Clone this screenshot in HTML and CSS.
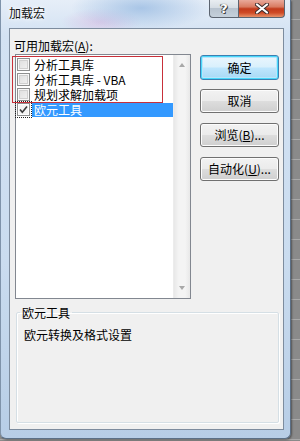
FILE: index.html
```html
<!DOCTYPE html>
<html lang="zh-CN">
<head>
<meta charset="utf-8">
<title>加载宏</title>
<link rel="stylesheet" href="styles.css">
</head>
<body>
<div class="window">
  <div class="titlebar">
    <span class="title">加载宏</span>
    <div class="caption-buttons">
      <div class="cap help">?</div>
      <div class="cap close">
        <svg width="14" height="11" viewBox="0 0 14 11">
          <path d="M2 1.5 L12 9.5 M12 1.5 L2 9.5" stroke="#3a2a2a" stroke-width="4" stroke-linecap="round"/>
          <path d="M2 1.5 L12 9.5 M12 1.5 L2 9.5" stroke="#ffffff" stroke-width="2.2" stroke-linecap="round"/>
        </svg>
      </div>
    </div>
  </div>
  <div class="client">
    <div class="main">
      <div class="left">
        <div class="label">可用加载宏(<u>A</u>):</div>
        <div class="listbox">
          <div class="items">
            <div class="item"><span class="cb"></span><span class="txt">分析工具库</span></div>
            <div class="item"><span class="cb"></span><span class="txt">分析工具库 - VBA</span></div>
            <div class="item"><span class="cb"></span><span class="txt">规划求解加载项</span></div>
            <div class="item selected"><span class="cb checked"><svg width="11" height="11" viewBox="0 0 11 11"><path d="M2 5.5 L4.3 8.2 L9 2.5" fill="none" stroke="#3b3b3b" stroke-width="1.6"/></svg></span><span class="txt">欧元工具</span></div>
          </div>
          <div class="scrollbar">
            <span class="arrow up"></span>
            <span class="arrow down"></span>
          </div>
          <div class="annot"></div>
        </div>
      </div>
      <div class="buttons">
        <div class="btn default">确定</div>
        <div class="btn">取消</div>
        <div class="btn">浏览(<u>B</u>)...</div>
        <div class="btn">自动化(<u>U</u>)...</div>
      </div>
    </div>
    <fieldset class="group">
      <legend>欧元工具</legend>
      <p class="desc">欧元转换及格式设置</p>
    </fieldset>
  </div>
</div>
</body>
</html>
```

FILE: styles.css
```css
* { box-sizing: border-box; }
html, body { margin: 0; padding: 0; }
body {
  width: 300px;
  height: 441px;
  overflow: hidden;
  background:
    repeating-linear-gradient(to bottom, #8a8a8a 0px, #8a8a8a 19px, #a9a9a9 19px, #a9a9a9 20px);
  font-family: "Noto Sans CJK SC", "Noto Sans", sans-serif;
  font-size: 12px;
  color: #000;
}
.window {
  width: 291px;
  height: 439px;
  padding: 0 6px 9px 8px;
  background:
    radial-gradient(ellipse 70px 22px at 140px 8px, rgba(150,185,225,0.75), rgba(150,185,225,0) 100%),
    radial-gradient(ellipse 40px 14px at 100px 22px, rgba(215,175,220,0.5), rgba(215,175,220,0) 100%),
    linear-gradient(to bottom, #e6eef8 0%, #d3e2f3 8%, #cadcef 60%, #b7cde6 100%);
  border: 1px solid #5b6f86;
  border-top: none;
  border-left-color: #7f93aa;
  border-radius: 0 0 6px 6px;
  box-shadow: 1px 1px 2px rgba(0,0,0,0.4);
}
.titlebar {
  height: 28px;
  display: flex;
  justify-content: space-between;
  align-items: flex-start;
}
.title {
  margin-top: 5px;
  line-height: 16px;
  color: #111;
  text-shadow: 0 0 6px #fff, 0 0 3px #fff;
}
.caption-buttons {
  display: flex;
  margin-right: -1px;
}
.cap {
  height: 18px;
  border: 1px solid #5c6470;
  border-top: none;
  display: flex;
  align-items: center;
  justify-content: center;
}
.help {
  width: 29px;
  border-radius: 0 0 0 4px;
  border-right: none;
  background: linear-gradient(to bottom, #e9edf1 0%, #d6dde4 45%, #b8c3cf 50%, #c5d0db 100%);
  color: #fff;
  font-family: "DejaVu Sans", sans-serif;
  font-weight: bold;
  font-size: 13px;
  text-shadow: 0 0 1px #333, 1px 1px 0 #444, -1px 0 0 #555;
}
.close {
  width: 47px;
  border-radius: 0 0 4px 0;
  background: linear-gradient(to bottom, #e9a99b 0%, #d97b62 40%, #c23a1c 52%, #cf4a26 75%, #e8926a 100%);
}
.client {
  height: 402px;
  background: #f0f0f0;
  border: 1px solid #7d8c9e;
}
.main {
  display: flex;
  gap: 9px;
  padding-left: 5px;
}
.left {
  width: 176px;
}
.label {
  margin-top: 9px;
  margin-left: -1px;
  line-height: 15px;
  height: 16px;
}
.label u, .btn u { text-decoration: underline; text-underline-offset: 1px; }
.listbox {
  position: relative;
  height: 245px;
  background: #fff;
  border: 1px solid #828790;
  display: flex;
}
.items {
  flex: 1;
  padding-top: 2px;
}
.item {
  display: flex;
  align-items: center;
  height: 15px;
}
.cb {
  width: 13px;
  height: 13px;
  margin-left: 1px;
  border: 1px solid #8e8f8f;
  background: linear-gradient(135deg, #dcdcdc 0%, #f4f4f4 100%);
  box-shadow: inset 0 0 0 1px #f8f8f8, inset 0 0 0 2px #d0d0d0;
  display: flex;
  align-items: center;
  justify-content: center;
}
.cb.checked {
  background: #f4f4f4;
  box-shadow: inset 0 0 0 1px #fff;
  outline: 1px dotted #222;
  outline-offset: 1px;
}
.txt {
  flex: 1;
  margin-left: 2px;
  padding-left: 2px;
  line-height: 14px;
  height: 14px;
  white-space: nowrap;
}
.selected .txt {
  background: #3399ff;
  color: #fff;
}
.scrollbar {
  width: 17px;
  background: linear-gradient(to right, #e8e8e8, #f4f4f4 30%, #f4f4f4 70%, #e8e8e8);
  border-left: 1px solid #ececec;
  display: flex;
  flex-direction: column;
  justify-content: space-between;
  align-items: center;
  padding: 8px 0 8px;
}
.arrow {
  width: 0;
  height: 0;
  border-left: 3.5px solid transparent;
  border-right: 3.5px solid transparent;
}
.arrow.up { border-bottom: 4px solid #a8a8a8; }
.arrow.down { border-top: 4px solid #a8a8a8; }
.annot {
  position: absolute;
  left: -4px;
  top: 1px;
  width: 151px;
  height: 47px;
  border: 1px solid #c8303a;
}
.buttons {
  width: 79px;
  padding-top: 26px;
  display: flex;
  flex-direction: column;
  gap: 10px;
}
.btn {
  height: 24px;
  border: 1px solid #707070;
  border-radius: 3px;
  background: linear-gradient(to bottom, #f2f2f2 0%, #ebebeb 48%, #dddddd 52%, #cfcfcf 100%);
  box-shadow: inset 0 0 0 1px #fcfcfc;
  display: flex;
  align-items: center;
  justify-content: center;
  line-height: 14px;
  white-space: nowrap;
}
.btn.default {
  height: 25px;
  border-color: #3c7fb1;
  box-shadow: inset 0 0 0 1px #48d8fb, inset 0 0 0 2px #b8e6fb;
  background: linear-gradient(to bottom, #eaf6fd 0%, #d9f0fc 48%, #bee6fd 52%, #a7d9f5 100%);
  margin-bottom: -1px;
}
.group {
  margin: 6px 0 0 6px;
  width: 263px;
  height: 118px;
  padding: 0 6px 0 3px;
  border: 1px solid #d5dfe5;
  box-shadow: inset 1px 1px 0 #fff, 1px 1px 0 #fff;
  border-radius: 2px;
  min-width: 0;
}
.group legend {
  padding: 0 2px;
  line-height: 15px;
  height: 15px;
}
.desc {
  margin: 7px 0 0 4px;
  line-height: 15px;
}
```
